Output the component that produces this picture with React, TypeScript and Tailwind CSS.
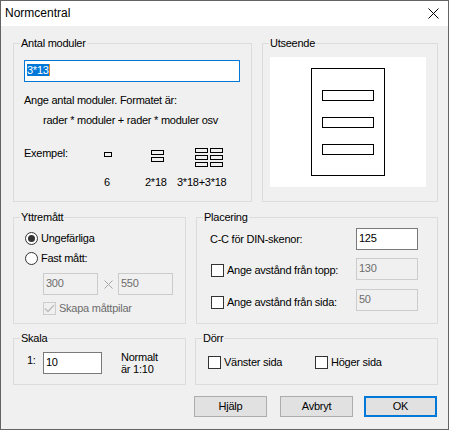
import React from "react";

// Normcentral — Windows-dialog med gruppramar

function Group({
  label,
  className = "",
  children,
}: {
  label: string;
  className?: string;
  children?: React.ReactNode;
}) {
  return (
    <div className={`relative shrink-0 border border-[#dcdcdc] ${className}`}>
      <span className="absolute left-[6px] -top-[7px] bg-[#f0f0f0] px-[1px] leading-[13px]">{label}</span>
      {children}
    </div>
  );
}

function Check({ checked = false, disabled = false }: { checked?: boolean; disabled?: boolean }) {
  return (
    <span
      className={`flex h-[13px] w-[13px] shrink-0 items-center justify-center border ${
        disabled ? "border-[#cccccc] bg-[#f0f0f0]" : "border-[#333333] bg-white"
      }`}
    >
      {checked && (
        <svg width="11" height="11" viewBox="0 0 11 11">
          <path d="M1 5.5 L4 8.5 L10 2" fill="none" stroke={disabled ? "#bcbcbc" : "#000"} strokeWidth="1.3" />
        </svg>
      )}
    </span>
  );
}

function Radio({ on = false }: { on?: boolean }) {
  return (
    <span className="flex h-[13px] w-[13px] shrink-0 items-center justify-center rounded-full border border-[#333333] bg-white">
      {on && <span className="h-[7px] w-[7px] rounded-full bg-[#333333]" />}
    </span>
  );
}

function Edit({
  value,
  w,
  disabled = false,
}: {
  value: string;
  w: string;
  disabled?: boolean;
}) {
  return (
    <div
      className={`flex h-[22px] shrink-0 items-start border pl-[2px] pt-[3px] ${w} ${
        disabled ? "border-[#cccccc] bg-[#f0f0f0] text-[#6d6d6d]" : "border-[#7a7a7a] bg-white"
      }`}
    >
      {value}
    </div>
  );
}

function Btn({ label, def = false, className = "" }: { label: string; def?: boolean; className?: string }) {
  return (
    <div
      className={`flex h-[21px] w-[73px] shrink-0 items-center justify-center bg-[#e1e1e1] ${
        def ? "border-2 border-[#0078d7]" : "border border-[#adadad]"
      } ${className}`}
    >
      {label}
    </div>
  );
}

export default function App() {
  return (
    <div className="flex h-[430px] w-[449px] flex-col border border-[#646464] bg-[#f0f0f0] font-['Liberation_Sans',Arial,sans-serif] text-[11px] leading-[13px] tracking-[-0.25px] text-black">
      {/* Titelrad */}
      <div className="flex h-[25px] shrink-0 items-center justify-between bg-white pl-[4px] pr-[9px]">
        <span className="text-[12px] tracking-normal">Normcentral</span>
        <svg width="11" height="11" viewBox="0 0 11 11" className="-mt-[1px]">
          <path d="M0.5 0.5 L10.5 10.5 M10.5 0.5 L0.5 10.5" stroke="#000" strokeWidth="1" />
        </svg>
      </div>

      {/* Rad 1 */}
      <div className="mt-[17px] flex pl-[12px]">
        <Group label="Antal moduler" className="h-[159px] w-[239px] pl-[10px] pt-[16px]">
          <div className="flex h-[22px] w-[216px] items-start border border-[#0078d7] bg-white pl-[2px] pt-[3px]">
            <span className="bg-[#0078d7] leading-[12px] text-white">3*13</span>
            <span className="h-[12px] w-[1px] bg-[#f08c1e]" />
          </div>
          <div className="mt-[12px]">Ange antal moduler. Formatet är:</div>
          <div className="mt-[7px] pl-[19px]">rader * moduler + rader * moduler osv</div>
          <div className="mt-[20px] flex items-start">
            <span className="w-[80px] shrink-0">Exempel:</span>
            <svg width="120" height="19" viewBox="0 0 120 19" className="mt-[1px]" fill="none" stroke="#000">
              <rect x="0.5" y="4.5" width="7" height="4" />
              <rect x="47.5" y="2.5" width="12" height="4" />
              <rect x="47.5" y="9.5" width="12" height="4" />
              <rect x="91.5" y="0.5" width="12" height="4" />
              <rect x="91.5" y="7.5" width="12" height="4" />
              <rect x="91.5" y="14.5" width="12" height="4" />
              <rect x="106.5" y="0.5" width="12" height="4" />
              <rect x="106.5" y="7.5" width="12" height="4" />
              <rect x="106.5" y="14.5" width="12" height="4" />
            </svg>
          </div>
          <div className="mt-[9px] flex pl-[80px]">
            <span className="w-[41px]">6</span>
            <span className="w-[32px]">2*18</span>
            <span>3*18+3*18</span>
          </div>
        </Group>

        <Group label="Utseende" className="ml-[10px] h-[159px] w-[176px] pl-[7px] pt-[13px]">
          <div className="h-[130px] w-[156px] bg-white">
            <svg width="156" height="130" viewBox="0 0 156 130" fill="none" stroke="#000">
              <rect x="41.5" y="11.5" width="73" height="107" />
              <rect x="52.5" y="33.5" width="51" height="10" />
              <rect x="52.5" y="60.5" width="51" height="10" />
              <rect x="52.5" y="87.5" width="51" height="10" />
            </svg>
          </div>
        </Group>
      </div>

      {/* Rad 2 */}
      <div className="mt-[15px] flex pl-[12px]">
        <Group label="Yttremått" className="h-[107px] w-[173px] pl-[11px] pt-[14px]">
          <div className="flex items-center gap-[3px]">
            <Radio on />
            <span>Ungefärliga</span>
          </div>
          <div className="mt-[7px] flex items-center gap-[3px]">
            <Radio />
            <span>Fast mått:</span>
          </div>
          <div className="ml-[18px] mt-[8px] flex items-center">
            <Edit value="300" w="w-[55px]" disabled />
            <span className="flex w-[20px] justify-center">
              <svg width="9" height="9" viewBox="0 0 9 9">
                <path d="M0.5 0.5 L8.5 8.5 M8.5 0.5 L0.5 8.5" stroke="#a6a6a6" strokeWidth="1" />
              </svg>
            </span>
            <Edit value="550" w="w-[55px]" disabled />
          </div>
          <div className="ml-[18px] mt-[7px] flex items-center gap-[3px]">
            <Check checked disabled />
            <span className="text-[#6d6d6d]">Skapa måttpilar</span>
          </div>
        </Group>

        <Group label="Placering" className="ml-[10px] h-[107px] w-[242px] pt-[10px]">
          <div className="flex items-center">
            <span className="w-[159px] shrink-0 pl-[13px]">C-C för DIN-skenor:</span>
            <Edit value="125" w="w-[62px]" />
          </div>
          <div className="mt-[8px] flex items-start">
            <div className="flex w-[159px] shrink-0 items-center gap-[3px] pl-[14px] pt-[6px]">
              <Check />
              <span>Ange avstånd från topp:</span>
            </div>
            <Edit value="130" w="w-[62px]" disabled />
          </div>
          <div className="mt-[9px] flex items-start">
            <div className="flex w-[159px] shrink-0 items-center gap-[3px] pl-[14px] pt-[7px]">
              <Check />
              <span>Ange avstånd från sida:</span>
            </div>
            <Edit value="50" w="w-[62px]" disabled />
          </div>
        </Group>
      </div>

      {/* Rad 3 */}
      <div className="mt-[14px] flex pl-[12px]">
        <Group label="Skala" className="flex h-[47px] w-[173px] items-start pl-[13px] pt-[11px]">
          <span className="mt-[4px] w-[16px] shrink-0">1:</span>
          <div className="mt-[2px]">
            <Edit value="10" w="w-[59px]" />
          </div>
          <div className="ml-[19px] mt-[1px] leading-[12px]">
            <div>Normalt</div>
            <div>är 1:10</div>
          </div>
        </Group>

        <Group label="Dörr" className="ml-[9px] h-[47px] w-[243px] pl-[12px] pt-[17px]">
          <div className="flex">
            <div className="flex w-[107px] items-center gap-[3px]">
              <Check />
              <span>Vänster sida</span>
            </div>
            <div className="flex items-center gap-[3px]">
              <Check />
              <span>Höger sida</span>
            </div>
          </div>
        </Group>
      </div>

      {/* Knappar */}
      <div className="mt-[11px] flex pl-[193px]">
        <Btn label="Hjälp" />
        <Btn label="Avbryt" className="ml-[13px]" />
        <Btn label="OK" def className="ml-[11px]" />
      </div>
    </div>
  );
}
